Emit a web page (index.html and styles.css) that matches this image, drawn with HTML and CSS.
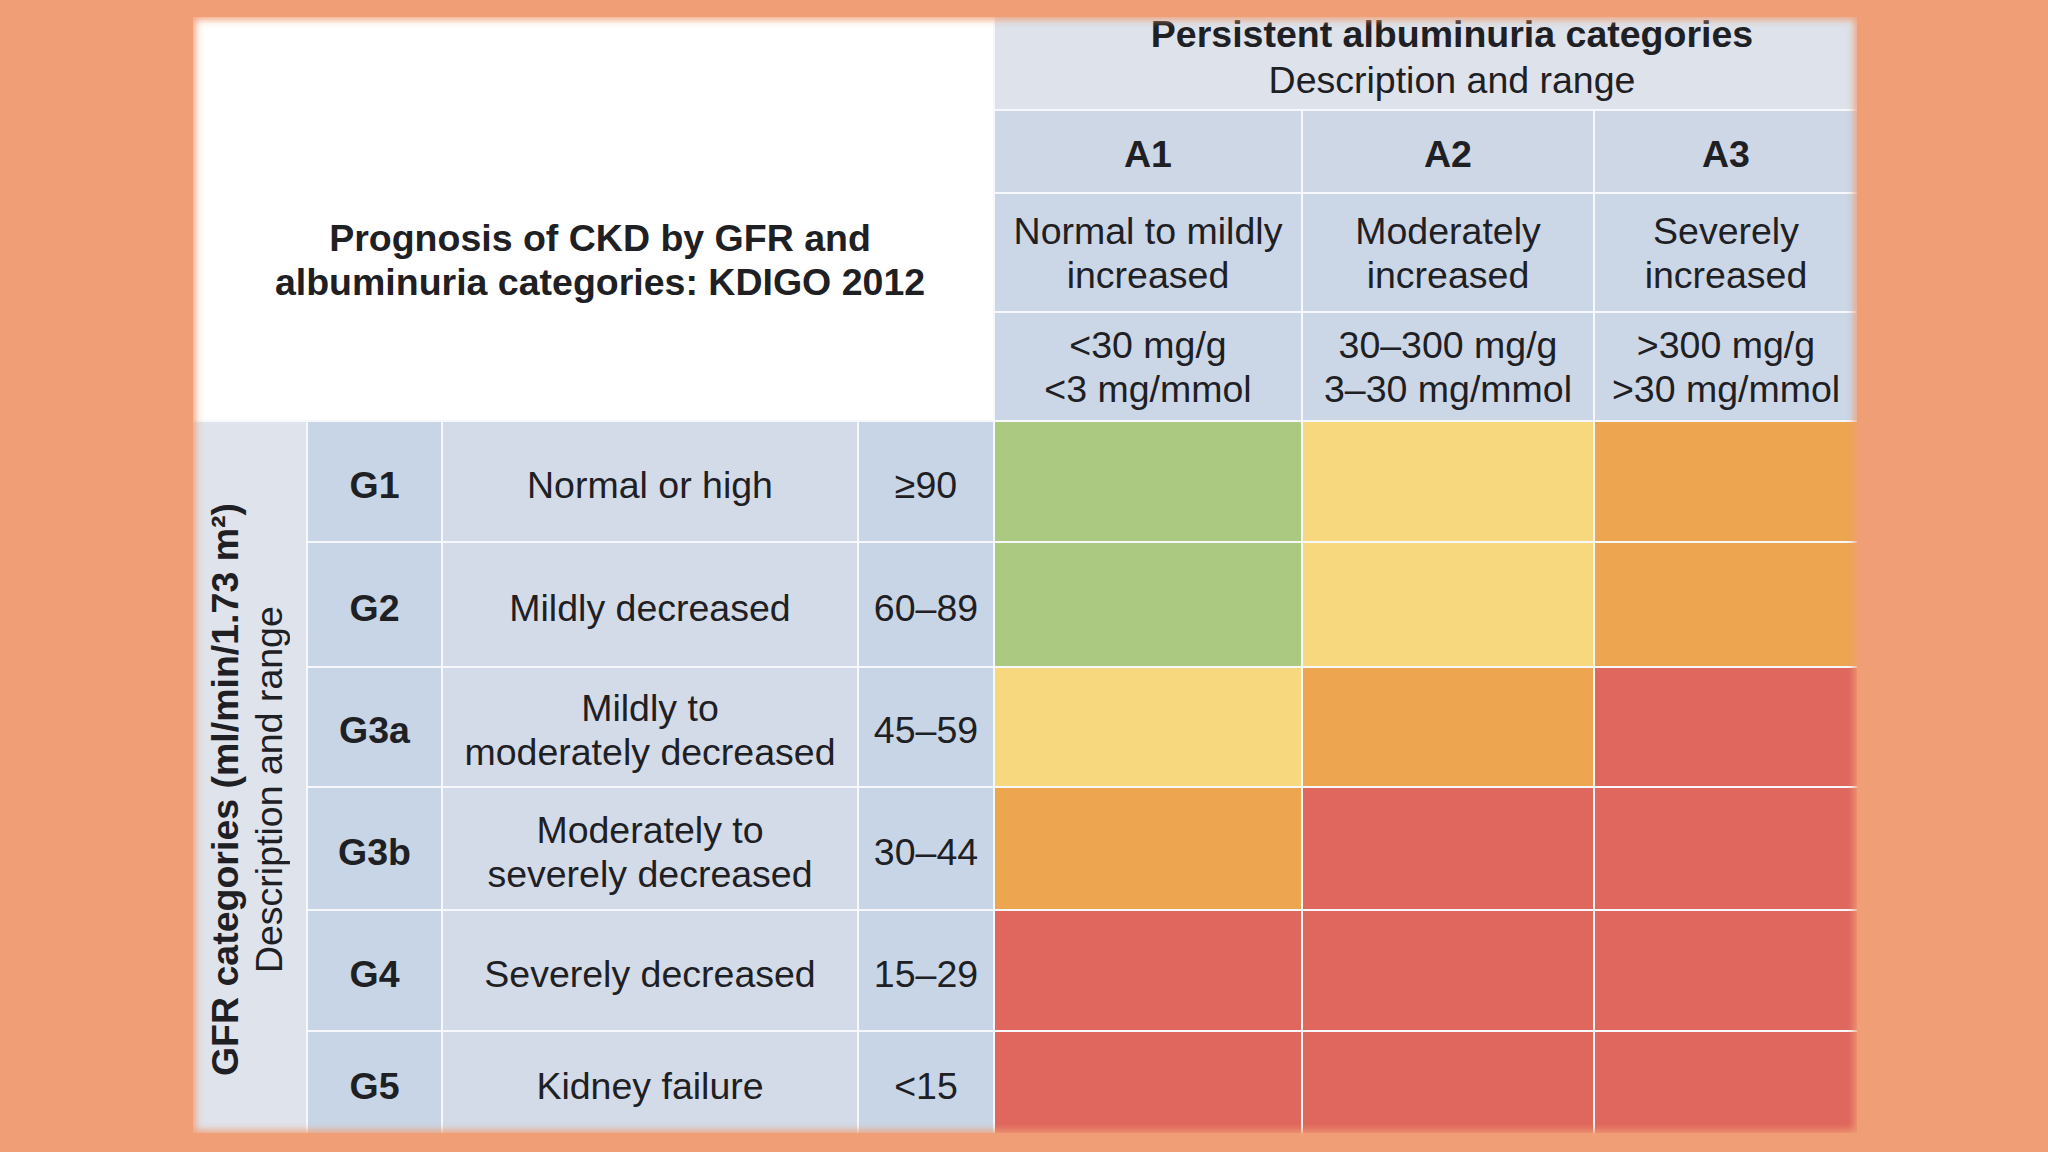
FILE: index.html
```html
<!DOCTYPE html>
<html lang="en">
<head>
<meta charset="utf-8">
<title>Prognosis of CKD by GFR and albuminuria categories: KDIGO 2012</title>
<link rel="stylesheet" href="styles.css">
</head>
<body>
<main class="page">
  <div class="sheet">
    <div class="grid">
      <div class="corner">
        <p class="title">Prognosis of CKD by GFR and<br>albuminuria categories: KDIGO 2012</p>
      </div>
      <div class="head-title">
        <span class="bold">Persistent albuminuria categories</span>
        <span>Description and range</span>
      </div>

      <div class="hcell cat bold">A1</div>
      <div class="hcell cat bold">A2</div>
      <div class="hcell cat bold">A3</div>

      <div class="hcell">Normal to mildly<br>increased</div>
      <div class="hcell">Moderately<br>increased</div>
      <div class="hcell">Severely<br>increased</div>

      <div class="hcell">&lt;30 mg/g<br>&lt;3 mg/mmol</div>
      <div class="hcell">30–300 mg/g<br>3–30 mg/mmol</div>
      <div class="hcell">&gt;300 mg/g<br>&gt;30 mg/mmol</div>

      <div class="side">
        <div class="side-text">
          <span class="bold">GFR categories (ml/min/1.73 m²)</span>
          <span>Description and range</span>
        </div>
      </div>

      <div class="gcell bold">G1</div>
      <div class="dcell">Normal or high</div>
      <div class="rcell">≥90</div>
      <div class="heat green"></div>
      <div class="heat yellow"></div>
      <div class="heat orange"></div>

      <div class="gcell bold">G2</div>
      <div class="dcell">Mildly decreased</div>
      <div class="rcell">60–89</div>
      <div class="heat green"></div>
      <div class="heat yellow"></div>
      <div class="heat orange"></div>

      <div class="gcell bold">G3a</div>
      <div class="dcell">Mildly to<br>moderately decreased</div>
      <div class="rcell">45–59</div>
      <div class="heat yellow"></div>
      <div class="heat orange"></div>
      <div class="heat red"></div>

      <div class="gcell bold">G3b</div>
      <div class="dcell">Moderately to<br>severely decreased</div>
      <div class="rcell">30–44</div>
      <div class="heat orange"></div>
      <div class="heat red"></div>
      <div class="heat red"></div>

      <div class="gcell bold">G4</div>
      <div class="dcell">Severely decreased</div>
      <div class="rcell">15–29</div>
      <div class="heat red"></div>
      <div class="heat red"></div>
      <div class="heat red"></div>

      <div class="gcell bold">G5</div>
      <div class="dcell">Kidney failure</div>
      <div class="rcell">&lt;15</div>
      <div class="heat red"></div>
      <div class="heat red"></div>
      <div class="heat red"></div>
    </div>
  </div>
</main>
</body>
</html>
```

FILE: styles.css
```css
html, body {
  margin: 0;
  padding: 0;
}

body {
  background: #ef9e75;
  font-family: "Liberation Sans", Arial, Helvetica, sans-serif;
  color: #1f2024;
  font-size: 37.5px;
  line-height: 44px;
}

.page {
  width: 2048px;
  height: 1152px;
  padding: 17px 0 0 193px;
  box-sizing: border-box;
}

.sheet {
  position: relative;
  width: 1664px;
  height: 1116px;
}

.sheet::after {
  content: "";
  position: absolute;
  inset: 0;
  pointer-events: none;
  box-shadow: inset 0 0 7px 3px rgba(239, 158, 117, 0.9);
}

.grid {
  display: grid;
  width: 100%;
  height: 100%;
  background: #f6f8fb;
  grid-template-columns: 113px 133px 414px 134px 306px 290px 1fr;
  grid-template-rows: 92px 81px 117px 107px 119px 123px 118px 121px 119px 1fr;
  gap: 2px;
}

.bold {
  font-weight: 700;
}

.corner {
  grid-column: 1 / 5;
  grid-row: 1 / 5;
  background: #ffffff;
  display: flex;
  align-items: center;
  justify-content: center;
  padding-top: 83px;
  padding-left: 14px;
}

.title {
  margin: 0;
  font-weight: 700;
  text-align: center;
}

.head-title {
  grid-column: 5 / 8;
  grid-row: 1;
  background: #dde2eb;
  display: flex;
  flex-direction: column;
  align-items: center;
  justify-content: flex-start;
  padding-left: 52px;
  line-height: 34px;
  row-gap: 12px;
}

.hcell {
  background: #cbd6e6;
  display: flex;
  align-items: center;
  justify-content: center;
  text-align: center;
}

.cat {
  background: #cdd7e6;
  padding-top: 4px;
}

.side {
  grid-column: 1;
  grid-row: 5 / 11;
  background: #dfe3ec;
  display: flex;
  align-items: center;
  justify-content: center;
  padding-top: 24px;
  padding-right: 6px;
}

.side-text {
  writing-mode: vertical-rl;
  transform: rotate(180deg);
  display: flex;
  flex-direction: column;
  align-items: center;
  white-space: nowrap;
}

.gcell,
.rcell {
  background: #c8d5e6;
  display: flex;
  align-items: center;
  justify-content: center;
  text-align: center;
  padding-top: 6px;
}

.dcell {
  background: #d3dbe8;
  display: flex;
  align-items: center;
  justify-content: center;
  text-align: center;
  padding-top: 6px;
}

.heat.green { background: #abc981; }
.heat.yellow { background: #f7d87f; }
.heat.orange { background: #eda550; }
.heat.red { background: #e0675e; }
```
